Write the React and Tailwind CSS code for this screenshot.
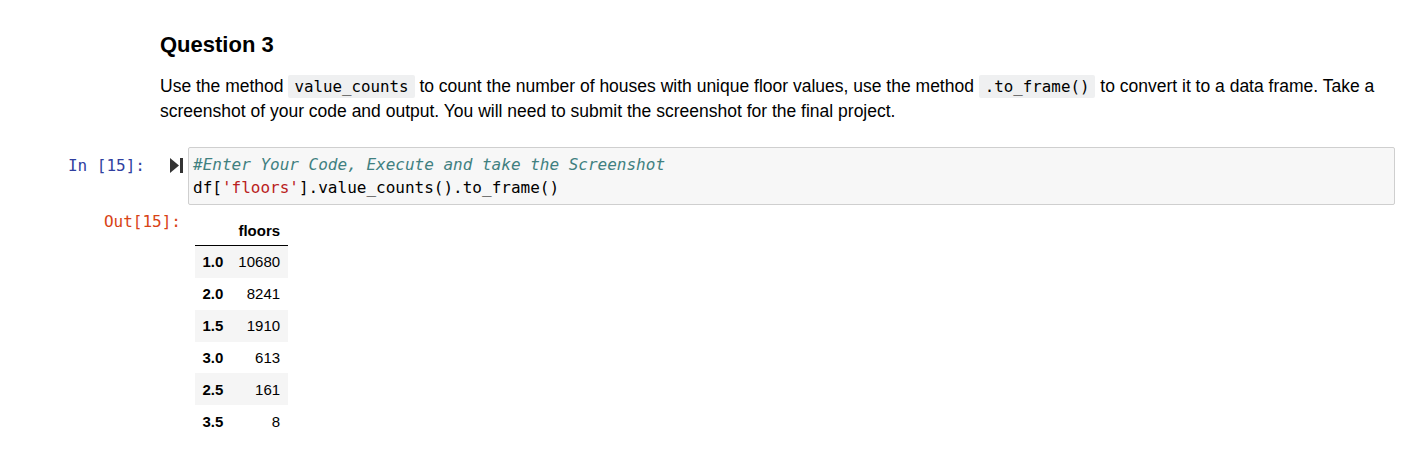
import React from "react";

const mono = "font-['DejaVu_Sans_Mono','Liberation_Mono',monospace]";
const sans = "font-['Liberation_Sans',Arial,sans-serif]";

const rows = [
  ["1.0", "10680"],
  ["2.0", "8241"],
  ["1.5", "1910"],
  ["3.0", "613"],
  ["2.5", "161"],
  ["3.5", "8"],
];

// inline code in the markdown cell
const Code = ({ children }) => (
  <code className={`${mono} text-[15.8px] bg-[#eff0f1] px-[6px] py-[2px] rounded-[2px] text-black`}>
    {children}
  </code>
);

const RunIcon = () => (
  <svg width="13" height="15" viewBox="0 0 13 15" className="text-[#333]">
    <polygon points="0,0 9,7.5 0,15" fill="currentColor" />
    <rect x="10" y="0" width="3" height="15" fill="currentColor" />
  </svg>
);

export default function App() {
  return (
    <div className={`w-[1417px] h-[457px] bg-white ${sans} text-black overflow-hidden`}>
      {/* markdown cell */}
      <div className="pl-[160px] pr-[22px] pt-[34px]">
        <h3 className="text-[22px] leading-[22px] font-bold">Question 3</h3>
        <p className="mt-[18px] text-[17.5px] leading-[25px] text-black">
          Use the method <Code>value_counts</Code> to count the number of houses with unique floor values, use the
          method <Code>.to_frame()</Code> to convert it to a data frame. Take a screenshot of your code and output. You
          will need to submit the screenshot for the final project.
        </p>
      </div>

      {/* code cell */}
      <div className="flex mt-[23px] pr-[22px]">
        <div className="w-[188px] flex items-start pt-[10px]">
          <div className={`${mono} text-[16px] leading-[18px] text-[#303F9F] w-[145px] text-right`}>In [15]:</div>
          <div className="ml-[25px] pt-[1px]">
            <RunIcon />
          </div>
        </div>
        <div className="flex-1 bg-[#f7f7f7] border border-[#cfcfcf] rounded-[2px] px-[4px] py-[5px] h-[58px]">
          <pre className={`${mono} text-[16px] leading-[23px] text-black`}>
            <span className="italic text-[#408080]">#Enter Your Code, Execute and take the Screenshot</span>
            {"\n"}df[<span className="text-[#BA2121]">'floors'</span>].value_counts().to_frame()
          </pre>
        </div>
      </div>

      {/* output */}
      <div className="flex mt-[1px]">
        <div className="w-[195px] pt-[4px]">
          <div className={`${mono} text-[16px] leading-[23px] text-[#D84315] w-[181px] text-right`}>Out[15]:</div>
        </div>
        <table className="border-collapse text-[15px] leading-[17.6px] mt-[7px]">
          <thead>
            <tr className="border-b border-black">
              <th className="px-[7.5px] pt-[9px] pb-[5px]"></th>
              <th className="px-[7.5px] pt-[9px] pb-[5px] text-right font-bold">floors</th>
            </tr>
          </thead>
          <tbody>
            {rows.map(([idx, val], i) => (
              <tr key={idx} className={i % 2 === 0 ? "bg-[#f5f5f5]" : "bg-white"}>
                <th className="px-[7.5px] py-[7.2px] text-left font-bold">{idx}</th>
                <td className="px-[7.5px] py-[7.2px] text-right">{val}</td>
              </tr>
            ))}
          </tbody>
        </table>
      </div>
    </div>
  );
}
